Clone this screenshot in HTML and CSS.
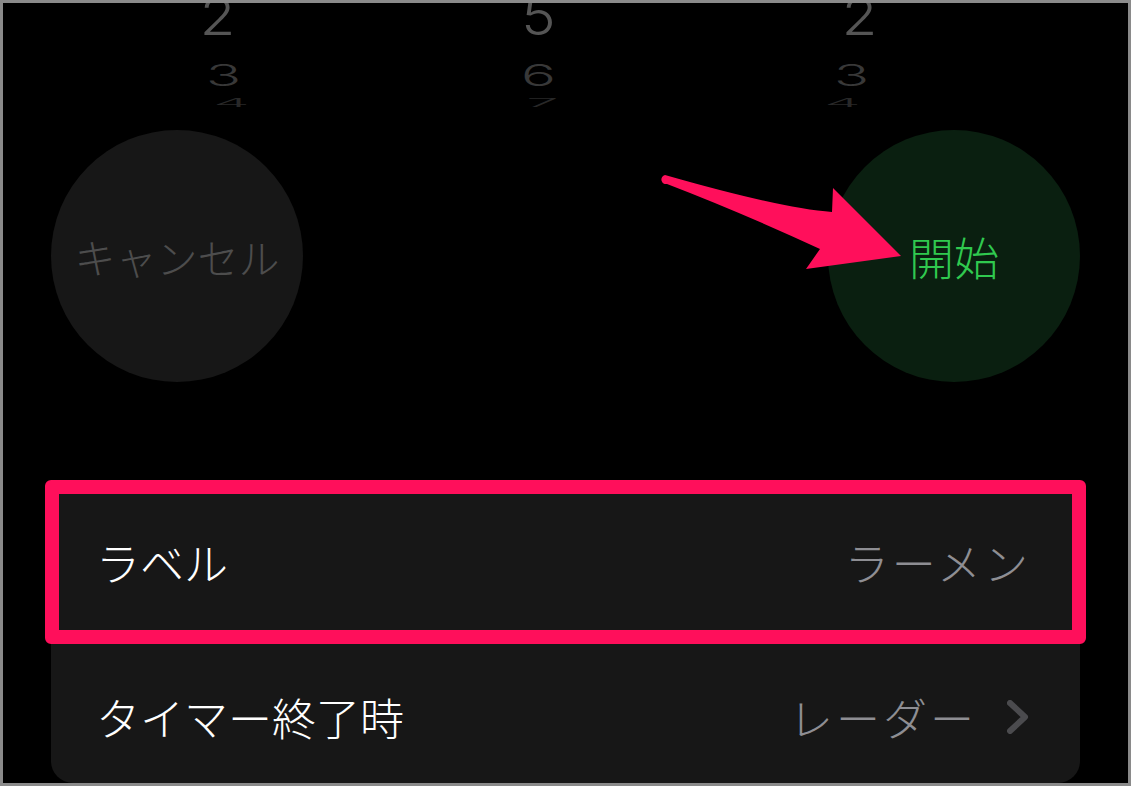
FILE: index.html
```html
<!DOCTYPE html>
<html lang="ja">

<head>
    <meta charset="UTF-8">
    <meta name="viewport" content="width=device-width, initial-scale=1.0">
    <title>タイマー</title>
    <link rel="stylesheet" href="styles.css">
</head>

<body>
    <div class="frame">
        <div class="picker">
            <div class="wheel wheel-l">
                <div class="row r1">2</div>
                <div class="row r2">3</div>
                <div class="row r3">4</div>
            </div>
            <div class="wheel wheel-m">
                <div class="row r1">5</div>
                <div class="row r2">6</div>
                <div class="row r3">7</div>
            </div>
            <div class="wheel wheel-r">
                <div class="row r1">2</div>
                <div class="row r2">3</div>
                <div class="row r3">4</div>
            </div>
        </div>

        <div class="controls">
            <button class="round cancel">キャンセル</button>
            <button class="round start">開始</button>
        </div>

        <ul class="card">
            <li class="item item-label">
                <span class="name">ラベル</span>
                <span class="value">ラーメン</span>
            </li>
            <li class="item item-end">
                <span class="name">タイマー終了時</span>
                <span class="value">レーダー
                    <svg class="chev" width="22" height="34" viewBox="0 0 22 34">
                        <path d="M3 3 L18 17 L3 31" fill="none" stroke="#4b4b4e" stroke-width="6" stroke-linecap="round" stroke-linejoin="round" />
                    </svg>
                </span>
            </li>
        </ul>

        <!-- 注釈の矢印 -->
        <svg class="arrow" width="1131" height="786" viewBox="0 0 1131 786">
            <path d="M665 175 Q780 208 832 212 L833 188 L901 256 L806 269 L820 249 Q740 212 667 184 A4.5 4.5 0 0 1 665 175 Z" fill="#ff0f5b" />
        </svg>
    </div>
</body>

</html>
```

FILE: styles.css
```css
* {
    margin: 0;
    padding: 0;
    list-style: none;
    box-sizing: border-box;
}

body {
    background: #000;
}

.frame {
    position: relative;
    width: 1131px;
    height: 786px;
    border: 3px solid #8a8a8a;
    background: #000;
    padding: 0 48px;
    overflow: hidden;
    font-family: "Noto Sans CJK JP", sans-serif;
    font-weight: 300;
}

/* ピッカー */
.picker {
    height: 127px;
    display: grid;
    grid-template-columns: repeat(3, 321px);
    margin-left: 6px;
    overflow: hidden;
}

.wheel {
    margin-top: -18px;
    display: flex;
    flex-direction: column;
    align-items: center;
    font-family: Inter, "Liberation Sans", sans-serif;
    font-size: 58px;
}

.row {
    line-height: 58px;
    transform-origin: 50% 50px;
}

.r1 {
    height: 51px;
    color: #555;
    transform: scaleY(0.9);
}

.r2 {
    height: 21px;
    color: #383838;
    transform: scaleY(0.52);
}

.r3 {
    height: 58px;
    color: #282828;
    transform: scaleY(0.19);
}

.wheel-l .r2 { transform: translateX(6px) scaleY(0.52); }
.wheel-l .r3 { transform: translateX(14px) scaleY(0.19); }
.wheel-m .r3 { transform: translateX(4px) scaleY(0.19); }
.wheel-r .r2 { transform: translateX(-8px) scaleY(0.52); }
.wheel-r .r3 { transform: translateX(-17px) scaleY(0.19); }

/* ボタン */
.controls {
    display: flex;
    justify-content: space-between;
}

.round {
    width: 252px;
    height: 252px;
    border: 0;
    border-radius: 50%;
    font-family: "Noto Sans CJK JP", sans-serif;
    font-weight: 300;
    font-size: 41px;
}

.cancel {
    background: #171717;
    color: #4d4d4d;
}

.start {
    background: #0a1f10;
    color: #30c94f;
    font-size: 45px;
}

/* リスト */
.card {
    margin-top: 105px;
    background: #171717;
    border-radius: 22px;
    height: 296px;
}

.item {
    display: flex;
    justify-content: space-between;
    align-items: center;
    padding: 0 49px 0 45px;
    font-size: 44px;
    color: #fff;
}

.item-label {
    position: relative;
    height: 150px;
}

.item-label::after {
    position: absolute;
    content: "";
    top: -7px;
    bottom: -7px;
    left: -6px;
    right: -6px;
    border: 14px solid #ff0f5b;
    border-radius: 6px;
}

.item-end {
    height: 146px;
    padding-top: 14px;
    padding-right: 51px;
}

.value {
    color: #8e8e93;
    display: flex;
    align-items: center;
    letter-spacing: 3px;
}

.chev {
    margin-left: 30px;
}

.arrow {
    position: absolute;
    left: -3px;
    top: -3px;
    pointer-events: none;
}
```
